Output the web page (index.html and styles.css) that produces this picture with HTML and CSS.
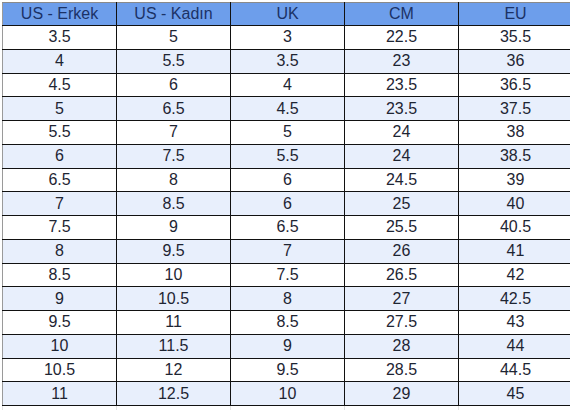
FILE: index.html
```html
<html>
  <head>
    <meta charset="utf-8">
    <link rel="stylesheet" href="styles.css">
  </head>
  <body>
    <table class="sizes">
      <thead>
        <tr>
          <th>US - Erkek</th>
          <th>US - Kadın</th>
          <th>UK</th>
          <th>CM</th>
          <th>EU</th>
        </tr>
      </thead>
      <tbody>
        <tr><td>3.5</td><td>5</td><td>3</td><td>22.5</td><td>35.5</td></tr>
        <tr><td>4</td><td>5.5</td><td>3.5</td><td>23</td><td>36</td></tr>
        <tr><td>4.5</td><td>6</td><td>4</td><td>23.5</td><td>36.5</td></tr>
        <tr><td>5</td><td>6.5</td><td>4.5</td><td>23.5</td><td>37.5</td></tr>
        <tr><td>5.5</td><td>7</td><td>5</td><td>24</td><td>38</td></tr>
        <tr><td>6</td><td>7.5</td><td>5.5</td><td>24</td><td>38.5</td></tr>
        <tr><td>6.5</td><td>8</td><td>6</td><td>24.5</td><td>39</td></tr>
        <tr><td>7</td><td>8.5</td><td>6</td><td>25</td><td>40</td></tr>
        <tr><td>7.5</td><td>9</td><td>6.5</td><td>25.5</td><td>40.5</td></tr>
        <tr><td>8</td><td>9.5</td><td>7</td><td>26</td><td>41</td></tr>
        <tr><td>8.5</td><td>10</td><td>7.5</td><td>26.5</td><td>42</td></tr>
        <tr><td>9</td><td>10.5</td><td>8</td><td>27</td><td>42.5</td></tr>
        <tr><td>9.5</td><td>11</td><td>8.5</td><td>27.5</td><td>43</td></tr>
        <tr><td>10</td><td>11.5</td><td>9</td><td>28</td><td>44</td></tr>
        <tr><td>10.5</td><td>12</td><td>9.5</td><td>28.5</td><td>44.5</td></tr>
        <tr><td>11</td><td>12.5</td><td>10</td><td>29</td><td>45</td></tr>
        <tr class="blank"><td></td><td></td><td></td><td></td><td></td></tr>
      </tbody>
    </table>
  </body>
</html>
```
FILE: styles.css
```css
html, body {
  margin: 0;
  padding: 0;
  background: white;
  overflow: hidden;
}

body {
  padding: 2px 0 0 2px;
  font-family: "Liberation Sans", Arial, sans-serif;
  font-size: 15px;
  color: #1e2533;
}

table.sizes {
  border-collapse: collapse;
  table-layout: fixed;
  width: 566px;
}

table.sizes th,
table.sizes td {
  width: 113px;
  height: 23.75px;
  padding: 0;
  text-align: center;
  font-weight: normal;
  border: solid 1px #111;
  line-height: 22px;
}

table.sizes th {
  height: 22px;
  background-color: #6d9eeb;
  color: #1b3266;
  border-top-color: #8a8a8a;
}

table.sizes th:first-child,
table.sizes td:first-child {
  border-left-color: #9a9a9a;
}

table.sizes th:last-child,
table.sizes td:last-child {
  border-right-color: #555;
}

table.sizes tbody tr:nth-child(even) td {
  background-color: #e8effc;
}

table.sizes tr.blank td {
  background-color: white;
  border-color: #e2e2e2;
  border-top-color: #111;
  border-bottom: none;
}
```
